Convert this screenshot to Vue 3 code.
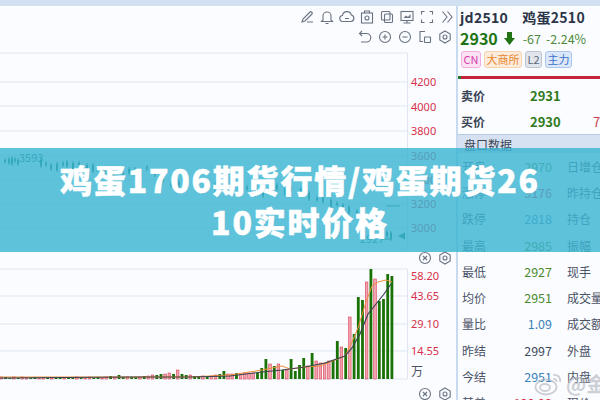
<template>
  <div class="page">
    <div class="top-strip"></div>
    <div class="main">
      <div class="chart-pane">
        <div class="toolbar">
          <div class="tool-row first">
            <svg v-for="icon in topIcons" :key="icon" class="icon" viewBox="0 0 16 16" v-html="icons[icon]"></svg>
          </div>
          <div class="tool-row">
            <svg v-for="icon in subIcons" :key="icon" class="icon" viewBox="0 0 16 16" v-html="icons[icon]"></svg>
          </div>
        </div>

        <svg class="kline" width="456" height="203" viewBox="0 0 456 203">
          <line v-for="y in priceLines" :key="y" x1="0" :y1="y" x2="407" :y2="y" class="grid" />
          <line x1="407.5" y1="6" x2="407.5" y2="203" class="grid" />
          <g v-for="c in candles" :key="c.x">
            <line :x1="c.x + 1" :y1="c.y - 2" :x2="c.x + 1" :y2="c.y + c.h + 2" class="wick" />
            <rect :x="c.x" :y="c.y" width="2" :height="c.h" class="candle" />
          </g>
          <text x="19" y="115" class="mark">3593</text>
          <text x="360" y="196" class="mark">2927</text>
          <line x1="382" y1="192" x2="392" y2="192" class="wick" />
          <line x1="386" y1="159" x2="400" y2="159" class="wick" />
          <polygon points="398,189 405,185.500 405,192.500" class="candle" />
          <text v-for="p in priceLabels" :key="p.text" x="411" :y="p.y" class="axis">{{ p.text }}</text>
        </svg>

        <div class="mini-tools">
          <svg v-for="icon in miniIcons" :key="icon" class="icon" viewBox="0 0 16 16" v-html="icons[icon]"></svg>
        </div>

        <svg class="volume" width="456" height="120" viewBox="0 0 456 120">
          <line v-for="y in volumeLines" :key="y" x1="0" :y1="y" x2="407" :y2="y" class="grid" />
          <line x1="407.5" y1="3" x2="407.5" y2="113" class="grid" />
          <rect
            v-for="b in bars"
            :key="b.x"
            :x="b.x"
            :y="113 - b.h"
            :width="b.up ? 2.6 : 2.8"
            :height="b.h"
            :class="b.up ? 'bar-up' : 'bar-down'"
          />
          <polyline :points="orangeLine" class="ma-orange" />
          <polyline :points="darkLine" class="ma-dark" />
          <text v-for="v in volumeLabels" :key="v.text" x="411" :y="v.y" class="axis">{{ v.text }}</text>
          <text x="411" y="110" class="unit">万</text>
        </svg>

        <div class="mini-tools">
          <svg v-for="icon in miniIcons" :key="icon" class="icon" viewBox="0 0 16 16" v-html="icons[icon]"></svg>
        </div>
      </div>

      <aside class="side">
        <div class="title-row">
          <span>jd2510</span>
          <span>鸡蛋2510</span>
        </div>
        <div class="price-row">
          <b>2930</b>
          <svg class="arrow" width="11" height="13" viewBox="0 0 11 13">
            <path d="M3 0h5v6h3l-5.500 7L0 6h3z" />
          </svg>
          <span class="change">-67</span>
          <span class="change">-2.24%</span>
        </div>
        <div class="tags">
          <span class="tag pink">CN</span>
          <span class="tag orange">大商所</span>
          <span class="tag gray">L2</span>
          <span class="tag blue">主力</span>
        </div>
        <div class="ratio"><i></i></div>
        <div class="quote">
          <b>卖价</b><b class="up-num">2931</b><span></span>
        </div>
        <div class="quote">
          <b>买价</b><b class="up-num">2930</b><span class="vol">7</span>
        </div>
        <div class="section-head">盘口数据</div>
        <div class="stats">
          <div v-for="s in stats" :key="s.label" class="stat">
            <span class="stat-label">{{ s.label }}</span>
            <span class="stat-value" :class="s.tone">{{ s.value }}</span>
            <span class="stat-label extra">{{ s.extra }}</span>
          </div>
        </div>
      </aside>
    </div>

    <div class="banner">
      <h1>鸡蛋1706期货行情/鸡蛋期货2610实时价格</h1>
    </div>

    <div class="watermark">
      <svg width="30" height="24" viewBox="0 0 30 24">
        <ellipse cx="12" cy="15" rx="10.500" ry="7.500" />
        <ellipse cx="11" cy="15.500" rx="5" ry="3.500" />
        <path d="M19 3c4-1 8 2 7 7M19 7c2-.5 4 1 3.500 3" />
      </svg>
      <span>@金</span>
    </div>
  </div>
</template>

<script setup>
const icons = {
  pencil: '<path d="M3 13l1-3 7-7c1-1 3 1 2 2l-7 7zM8 13h6"/>',
  bell: '<path d="M4 11V7a4 4 0 0 1 8 0v4l1.500 1.500h-11zM6.500 14.500h3"/>',
  cloud: '<path d="M4 12.500a3 3 0 0 1-.5-6 4.500 4.500 0 0 1 8.800-.5 3.300 3.300 0 0 1-.3 6.500zM6 9.500h4"/>',
  camera: '<rect x="2.500" y="4" width="11" height="10" /><path d="M5.500 4V2h5v2"/><circle cx="8" cy="9" r="2"/>',
  copy: '<rect x="2.500" y="2.500" width="8.500" height="8.500" rx="1"/><rect x="5.500" y="5" width="8" height="8.500" rx="1"/>',
  monitor: '<rect x="2" y="2.500" width="12" height="9"/><path d="M8 11.500v2.500M4.500 14h7"/><path d="M4.500 9l2.500-2.500 2 1.500 2.500-3v4z" class="solid"/>',
  full: '<path d="M2.500 5.500v-3h3M10.500 2.500h3v3M13.500 10.500v3h-3M5.500 13.500h-3v-3"/>',
  more: '<path d="M3.500 2.500L8 8l-4.500 5.500M8.500 2.500L13 8l-4.500 5.500"/>',
  undo: '<path d="M5 2L2.500 4.500 5 7M3 4.500h6.500a4 4 0 0 1 0 8.500H4"/>',
  plus: '<circle cx="8" cy="8" r="5.500"/><path d="M5.500 8h5M8 5.500v5"/>',
  minus: '<circle cx="8" cy="8" r="5.500"/><path d="M5.500 8h5"/>',
  crop: '<path d="M8 2.500H3v10h3"/><rect x="7.500" y="8" width="6" height="5.500" rx=".5"/>',
  gear: '<path d="M8 2l5.200 3v6L8 14l-5.200-3V5z"/><circle cx="8" cy="8" r="2"/>',
  close: '<circle cx="8" cy="8" r="5.500"/><path d="M6 6l4 4M10 6l-4 4"/>'
}

const topIcons = ['pencil', 'bell', 'cloud', 'camera', 'copy', 'monitor', 'full', 'more']
const subIcons = ['undo', 'plus', 'minus', 'crop', 'gear']
const miniIcons = ['close', 'gear']

// page y minus 47, since the svg starts below the toolbar
const priceLines = [6, 35, 59, 84, 109, 133, 157, 181]
const priceLabels = [
  { text: '4200', y: 39 },
  { text: '4000', y: 64 },
  { text: '3800', y: 88 },
  { text: '3600', y: 113 },
  { text: '3400', y: 137 },
  { text: '3200', y: 161 },
  { text: '3000', y: 185 }
]

const candlePath = [
  [4, 113], [8, 112], [11, 111], [14, 112], [17, 113], [40, 113], [45, 116], [50, 118], [56, 117],
  [62, 116], [66, 115], [72, 116], [78, 116], [86, 118], [92, 118], [96, 121], [104, 121], [112, 124],
  [122, 126], [128, 122], [134, 122], [146, 120], [154, 124], [162, 128], [170, 137], [178, 135],
  [186, 133], [196, 136], [206, 138], [214, 137], [222, 140], [232, 141], [240, 138], [246, 140],
  [254, 144], [262, 143], [270, 144], [276, 138], [284, 142], [290, 141], [300, 142], [308, 146],
  [316, 151], [322, 151], [330, 153], [336, 156], [342, 158], [348, 160], [356, 164], [362, 166],
  [372, 172], [380, 180], [386, 185], [390, 186]
]
const candles = candlePath.map(([x, y], i) => ({ x, y, h: 2 + (i % 3) * 2 }))

const volumeLines = [3, 30, 58, 85, 113]
const volumeLabels = [
  { text: '58.20', y: 14 },
  { text: '43.65', y: 34 },
  { text: '29.10', y: 62 },
  { text: '14.55', y: 89 }
]

// small bars on the left, then the run of bigger ones read from the picture
const leftHeights = [
  2, 2, 1, 2, 1, 2, 1, 1, 2, 1, 1, 1, 1, 1, 2, 1, 1, 1, 2, 1, 1, 2, 1, 2, 1, 2,
  3, 2, 4, 2, 2, 2, 2, 2, 3, 3, 4, 4, 5, 5, 6, 5, 9, 5, 4, 4, 3, 3, 3, 2, 3, 4, 5
]
const rightBars = [
  [8, 0], [5, 1], [5, 1], [6, 0], [5, 1], [6, 1], [6, 1], [6, 1], [6, 0], [11, 0], [20, 0], [15, 1], [13, 0], [15, 1],
  [9, 0], [9, 1], [20, 0], [8, 0], [14, 0], [21, 0], [13, 1], [26, 0], [18, 1], [16, 1], [16, 1], [18, 1], [19, 0], [38, 0],
  [32, 1], [31, 0], [62, 1], [45, 0], [82, 0], [79, 0], [97, 1], [110, 0], [100, 1], [78, 0], [80, 0], [105, 0], [103, 0]
]
const bars = [
  ...leftHeights.map((h, i) => ({ x: i * 4.2, h, up: i % 3 === 0 || i % 5 === 0 })),
  ...rightBars.map(([h, up], i) => ({ x: 222.500 + i * 4.2, h, up: !!up }))
]

const orangeLine = '0,111 120,111 190,111 230,109 262,104 272,102 282,100 290,103 305,101 320,100 335,94 345,90 352,76 358,62 366,36 372,20 378,16 386,14 392,16'
const darkLine = '0,112 130,111 190,111 230,110 262,106 282,104 305,101 325,97 345,90 352,82 360,68 368,48 376,38 384,28 391,18'

const stats = [
  { label: '开盘', value: '2970', tone: 'green', extra: '日增仓' },
  { label: '涨停', value: '3176', tone: 'red', extra: '昨持仓' },
  { label: '跌停', value: '2818', tone: 'sky', extra: '持仓' },
  { label: '最高', value: '2985', tone: 'green', extra: '振幅' },
  { label: '最低', value: '2927', tone: 'green', extra: '现手' },
  { label: '均价', value: '2951', tone: 'green', extra: '成交量' },
  { label: '量比', value: '1.09', tone: 'sky', extra: '成交额' },
  { label: '昨结', value: '2997', tone: 'dark', extra: '外盘' },
  { label: '今结', value: '2951', tone: 'sky', extra: '内盘' },
  { label: '基差', value: '129.99', tone: 'red', extra: '现价' }
]
</script>

<style>
html, body { margin: 0; background: #fafcff; }
</style>

<style scoped>
.page {
  position: relative;
  width: 600px;
  height: 400px;
  overflow: hidden;
  display: flex;
  flex-direction: column;
  background: #fafcff;
  font-family: "Noto Sans CJK SC", "Noto Sans", sans-serif;
}
.top-strip { height: 6px; flex: none; background: #d2e1f2; }
.main { flex: 1; display: flex; min-height: 0; }

.chart-pane { width: 456px; flex: none; display: flex; flex-direction: column; }
.toolbar { height: 41px; flex: none; padding-top: 1px; box-sizing: border-box; }
.tool-row { display: flex; justify-content: flex-end; gap: 4px; padding-right: 3px; height: 20px; align-items: center; }
.tool-row.first { padding-right: 1px; }
.icon {
  width: 16px;
  height: 16px;
  fill: none;
  stroke: #6a7382;
  stroke-width: 1.1;
  flex: none;
}
.icon :deep(.solid) { fill: #6a7382; stroke: none; }
.mini-tools { height: 16px; flex: none; display: flex; justify-content: flex-end; gap: 4px; padding-right: 3px; align-items: center; }
.kline, .volume { display: block; flex: none; }

.grid { stroke: #dfe6f1; stroke-width: 1; }
.wick { stroke: #146a50; stroke-width: 1; }
.candle { fill: #0e6f52; }
.mark { font-size: 11px; fill: #146a70; }
.axis { font-size: 11px; fill: #d8304a; font-family: "Noto Sans", sans-serif; }
.unit { font-size: 12px; fill: #4a5160; }
.bar-up { fill: #f3a3ad; stroke: #d9455a; stroke-width: .6; }
.bar-down { fill: #1a7206; }
.ma-orange { fill: none; stroke: #ef8e3a; stroke-width: 1; }
.ma-dark { fill: none; stroke: #3b4350; stroke-width: 1.2; }

.side {
  flex: 1;
  min-width: 0;
  overflow: hidden;
  border-left: 2px solid #c8daf0;
  display: flex;
  flex-direction: column;
}
.title-row {
  display: flex;
  gap: 14px;
  padding: 1px 0 0 2px;
  font-size: 14px;
  letter-spacing: .3px;
  font-weight: 700;
  line-height: 20px;
  color: #2c3548;
}
.price-row { display: flex; align-items: center; padding: 0 0 0 2px; height: 22px; color: #4f8a3c; font-size: 12.500px; white-space: nowrap; }
.price-row b { font-size: 16px; color: #207414; margin-right: 6px; }
.arrow { fill: #207414; margin-right: 8px; }
.change { margin-right: 5px; }
.tags { display: flex; gap: 3px; padding: 2px 0 0 3px; }
.tag {
  height: 15px;
  line-height: 15px;
  padding: 0 1.500px;
  font-size: 11px;
  border: 1px solid;
  border-radius: 3px;
}
.pink { background: #fbe2f3; border-color: #f2aede; color: #d53cae; }
.orange { background: #fdebdb; border-color: #f9d2ae; color: #e7862c; }
.gray { background: #e2e6ec; border-color: #bcc4d0; color: #596679; }
.blue { background: #dce8fa; border-color: #abc6ec; color: #3a70c8; }
.ratio { height: 3px; margin-top: 8px; background: #c3243c; flex: none; }
.ratio i { display: block; width: 3px; height: 3px; background: #2b7a2c; }
.quote {
  height: 26px;
  flex: none;
  display: grid;
  grid-template-columns: 69px 50px 1fr;
  align-items: center;
  padding-left: 3px;
  font-size: 12px;
  color: #3a4354;
}
.ratio + .quote { margin-top: 3px; }
.up-num { font-size: 13px; color: #2f7a1c; }
.vol { color: #c8404e; font-size: 13px; padding-left: 13px; }
.section-head {
  height: 18px;
  line-height: 20px;
  flex: none;
  padding-left: 6px;
  font-size: 12px;
  color: #3d4657;
  background: #d6e2f2;
  border-top: 1px solid #b7cbe8;
}
.stats { display: flex; flex-direction: column; }
.stat {
  height: 26.300px;
  flex: none;
  display: grid;
  grid-template-columns: 50px 40px 1fr;
  align-items: center;
  padding-left: 4px;
  font-size: 12px;
  white-space: nowrap;
}
.stat-label { color: #4a5266; }
.stat-value { text-align: right; font-size: 12.500px; }
.extra { padding-left: 15px; }
.green { color: #4b8a2e; }
.sky { color: #3b82b8; }
.dark { color: #424a5c; }
.red { color: #d8304a; }

.banner {
  position: absolute;
  left: 0;
  top: 148px;
  width: 600px;
  height: 104px;
  background: rgba(60, 180, 210, 0.82);
  display: flex;
  align-items: center;
  justify-content: center;
  padding: 0 55px;
  box-sizing: border-box;
}
.banner h1 {
  margin: 0;
  font-size: 32px;
  letter-spacing: 1.800px;
  line-height: 42px;
  font-weight: 900;
  color: #fff;
  -webkit-text-stroke: .5px #fff;
  text-align: center;
  word-break: break-all;
}

.watermark {
  position: absolute;
  right: 0;
  bottom: 2px;
  display: flex;
  align-items: center;
  gap: 2px;
  color: #a7acb4;
  font-size: 20px;
  font-weight: 700;
  opacity: .55;
  text-shadow: 0 0 3px #fff;
  width: 66px;
  overflow: hidden;
  white-space: nowrap;
}
.watermark svg { fill: none; stroke: #a7acb4; stroke-width: 1.800; flex: none; }
</style>
